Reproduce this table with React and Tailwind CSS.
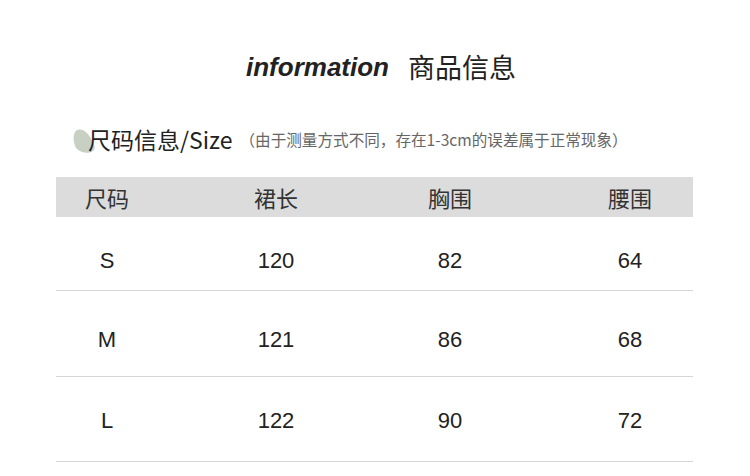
export default function App() {
  const rows = [
    ["S", "120", "82", "64", 74, "pt-[31px]"],
    ["M", "121", "86", "68", 86, "pt-[36px]"],
    ["L", "122", "90", "72", 85, "pt-[31px]"],
  ];
  const cjk = { fontFamily: '"Noto Sans CJK SC", "Noto Sans", sans-serif' };
  const arial = { fontFamily: '"Liberation Sans", Arial, sans-serif' };
  return (
    <div className="w-[750px] h-[476px] bg-white overflow-hidden relative">
      <div className="pt-[50px] flex justify-center items-center h-[84px] box-border">
        <div className="flex items-center h-[34px] translate-x-[6px]">
          <span className="text-[26px] font-bold italic text-[#222] leading-[34px]" style={arial}>information</span>
          <span className="text-[27px] text-[#222] ml-[19px] leading-[34px]" style={cjk}>商品信息</span>
        </div>
      </div>
      <div className="flex items-center pl-[72px] mt-[40px] h-[30px]">
        <svg width="26" height="26" viewBox="0 0 26 26" className="mr-[-10px] mt-[4px] shrink-0">
          <path d="M5 2 C10 0 15 4 18 9 C21 14 25 19 21 23 C17 26 9 25 5 21 C1 17 0 5 5 2 Z" fill="#c8cfc3" />
        </svg>
        <span className="text-[23px] text-[#222] leading-[30px] relative" style={cjk}>尺码信息/Size</span>
        <span className="text-[15.6px] text-[#666] ml-[7px] leading-[30px]" style={cjk}>（由于测量方式不同，存在1-3cm的误差属于正常现象）</span>
      </div>
      <div className="ml-[56px] w-[637px] mt-[23px]">
        <div className="grid grid-cols-[102px_236px_112px_187px] h-[40px] items-center bg-[#dcdcdc] text-[22px] text-[#333]" style={cjk}>
          <div className="text-center leading-[40px]">尺码</div>
          <div className="text-center leading-[40px]">裙长</div>
          <div className="text-center leading-[40px]">胸围</div>
          <div className="text-center leading-[40px] pl-[61px]">腰围</div>
        </div>
        {rows.map((r, i) => (
          <div
            key={i}
            className={`grid grid-cols-[102px_236px_112px_187px] items-start border-b border-[#d6d6d6] text-[22px] text-[#222] box-border ${r[5]}`}
            style={{ ...arial, height: r[4] }}
          >
            <div className="text-center leading-[26px]">{r[0]}</div>
            <div className="text-center leading-[26px]">{r[1]}</div>
            <div className="text-center leading-[26px]">{r[2]}</div>
            <div className="text-center leading-[26px] pl-[61px]">{r[3]}</div>
          </div>
        ))}
      </div>
    </div>
  );
}
